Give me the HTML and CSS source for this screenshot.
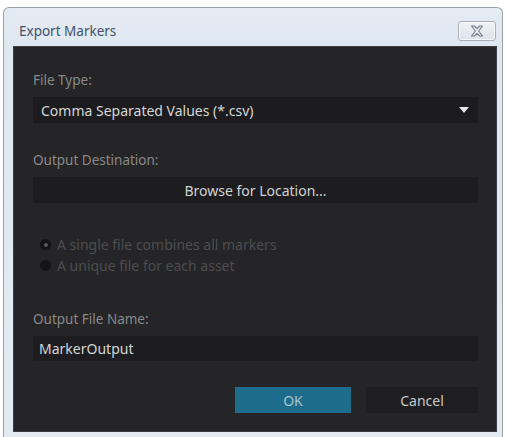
FILE: index.html
```html
<!DOCTYPE html>
<html>
<head>
<meta charset="utf-8">
<link rel="stylesheet" href="styles.css">
</head>
<body>
<div class="window">
  <div class="titlebar">
    <span class="title">Export Markers</span>
    <button class="close" aria-label="Close">
      <svg width="14" height="12" viewBox="0 0 14 12">
        <path d="M1.5 1 H4.5 L7 3.6 L9.5 1 H12.5 L8.6 6 L12.5 11 H9.5 L7 8.4 L4.5 11 H1.5 L5.4 6 Z" fill="#e9eef4" stroke="#6f7b89" stroke-width="1.1" stroke-linejoin="round"/>
      </svg>
    </button>
  </div>
  <div class="panel">
    <div class="label first">File Type:</div>
    <div class="select">
      <span>Comma Separated Values (*.csv)</span>
      <svg class="arrow" width="10" height="6" viewBox="0 0 10 6"><path d="M0 0 H10 L5 6 Z" fill="#e6e6e6"/></svg>
    </div>
    <div class="label">Output Destination:</div>
    <div class="browse">Browse for Location...</div>
    <div class="radios">
      <div class="radio"><span class="dot on"></span>A single file combines all markers</div>
      <div class="radio"><span class="dot"></span>A unique file for each asset</div>
    </div>
    <div class="label name">Output File Name:</div>
    <div class="input">MarkerOutput</div>
    <div class="buttons">
      <div class="btn ok">OK</div>
      <div class="btn cancel">Cancel</div>
    </div>
  </div>
</div>
</body>
</html>
```
FILE: styles.css
```css
html, body {
  margin: 0;
  padding: 0;
  background: #ffffff;
}
body {
  font-family: "Noto Sans", "Open Sans", "DejaVu Sans", sans-serif;
}
.window {
  margin: 7px 0 0 3px;
  width: 498px;
  height: 429px;
  border: 1px solid #9aa1aa;
  border-bottom: none;
  border-radius: 6px 6px 0 0;
  background: linear-gradient(#e4ebf3, #dfe7f0 40px, #e3eaf2);
  display: flex;
  flex-direction: column;
}
.titlebar {
  height: 30px;
  padding-top: 8px;
  padding-left: 15px;
  padding-right: 6px;
  display: flex;
  align-items: center;
  justify-content: space-between;
}
.title {
  font-size: 13.5px;
  color: #43526a;
}
.close {
  width: 38px;
  height: 20px;
  border: 1px solid #a9b0b9;
  border-radius: 3px;
  background: linear-gradient(#eef2f6, #dde3ea);
  display: flex;
  align-items: center;
  justify-content: center;
  padding: 0;
  box-shadow: inset 0 0 0 1px #f5f7fa;
}
.panel {
  margin: 0 5px 0 9px;
  height: 386px;
  background: #252527;
  border: 1px solid #3a3d42;
  box-sizing: border-box;
  padding: 0 18px 0 19px;
  display: flex;
  flex-direction: column;
}
.label {
  font-size: 13.5px;
  line-height: 18px;
  color: #88888a;
  margin-top: 28px;
}
.label.first {
  margin-top: 24px;
}
.label.name {
  margin-top: 34px;
}
.select {
  margin-top: 8px;
  height: 26px;
  background: #1c1c1e;
  display: flex;
  align-items: center;
  justify-content: space-between;
  padding: 0 9px 0 8px;
  font-size: 14px;
  color: #d6d6d6;
}
.arrow {
  margin-bottom: 1px;
}
.browse {
  margin-top: 8px;
  height: 26px;
  background: #1d1d1f;
  display: flex;
  align-items: center;
  justify-content: center;
  font-size: 14px;
  color: #d2d2d2;
}
.radios {
  margin-top: 31px;
  display: flex;
  flex-direction: column;
}
.radio {
  height: 21px;
  display: flex;
  align-items: center;
  font-size: 14px;
  color: #4c4c4f;
  padding-left: 7px;
}
.dot {
  width: 11px;
  height: 11px;
  border-radius: 50%;
  background: #141415;
  margin-right: 6px;
  display: flex;
  align-items: center;
  justify-content: center;
}
.dot.on::after {
  content: "";
  width: 4px;
  height: 4px;
  border-radius: 50%;
  background: #5a5a5c;
}
.input {
  margin-top: 8px;
  height: 25px;
  background: #1d1d1f;
  display: flex;
  align-items: center;
  padding-left: 6px;
  font-size: 14px;
  color: #d6d6d6;
}
.buttons {
  margin-top: 26px;
  display: flex;
  justify-content: flex-end;
  gap: 15px;
}
.btn {
  height: 26px;
  display: flex;
  align-items: center;
  justify-content: center;
  font-size: 14px;
}
.ok {
  width: 116px;
  background: #1e6c8b;
  color: #a8c4cf;
}
.cancel {
  width: 112px;
  background: #1e1e20;
  color: #c8c8ca;
}
```
